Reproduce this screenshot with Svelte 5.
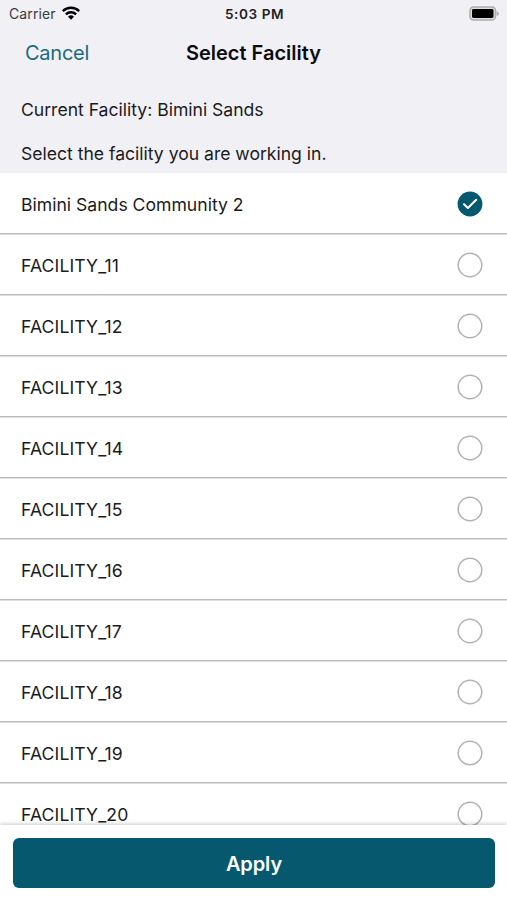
<script lang="ts">
	interface Facility {
		id: number;
		name: string;
	}

	const currentFacility = 'Bimini Sands';

	const facilities: Facility[] = [
		{ id: 1, name: 'Bimini Sands Community 2' },
		...Array.from({ length: 10 }, (_, i) => ({ id: i + 11, name: `FACILITY_${i + 11}` }))
	];

	let selected = $state(1);
</script>

<div class="screen">
	<header>
		<div class="status">
			<div class="carrier">
				<span>Carrier</span>
				<svg width="18" height="14" viewBox="0 0 18 14" aria-hidden="true">
					<g fill="none" stroke="#000" stroke-width="2.4">
						<path d="M0.8 5.1a11.6 11.6 0 0 1 16.4 0" />
						<path d="M3.9 8.4a7.2 7.2 0 0 1 10.2 0" />
					</g>
					<path d="M9 13.8 6 10.8a4.3 4.3 0 0 1 6 0z" />
				</svg>
			</div>
			<span class="time">5:03 PM</span>
			<svg class="battery" width="31" height="15" viewBox="0 0 31 15" aria-hidden="true">
				<rect x="1" y="1" width="25.5" height="13" rx="3.6" fill="#dededf" stroke="#adadaf" stroke-width="1.5" />
				<rect x="3" y="3" width="21.5" height="9" rx="1.4" />
				<path d="M27.6 5v5q2.4-1 2.4-2.5T27.6 5z" fill="#adadaf" />
			</svg>
		</div>

		<nav>
			<button class="cancel">Cancel</button>
			<h1>Select Facility</h1>
			<span></span>
		</nav>

		<p class="current">Current Facility: {currentFacility}</p>
		<p class="hint">Select the facility you are working in.</p>
	</header>

	<ul>
		{#each facilities as facility (facility.id)}
			<li>
				<button class="row" onclick={() => (selected = facility.id)}>
					<span class:code={facility.name.includes('_')}>{facility.name}</span>
					<svg width="26" height="26" viewBox="0 0 26 26" aria-hidden="true">
						{#if selected == facility.id}
							<circle cx="13" cy="13" r="12.4" fill="#05586e" />
							<path
								d="M7 13.2l3.9 3.8 8.3-8.3"
								fill="none"
								stroke="#fff"
								stroke-width="2"
								stroke-linecap="round"
								stroke-linejoin="round"
							/>
						{:else}
							<circle cx="13" cy="13" r="11.8" fill="#fff" stroke="#b3b3b3" stroke-width="1.5" />
						{/if}
					</svg>
				</button>
			</li>
		{/each}
	</ul>

	<footer>
		<button class="apply">Apply</button>
	</footer>
</div>

<style>
	:global(body) {
		margin: 0;
	}

	.screen {
		display: flex;
		flex-direction: column;
		height: 900px;
		overflow: hidden;
		background: #fff;
		color: #1b1b1d;
		font-family: Inter, 'Liberation Sans', sans-serif;
		font-size: 17.6px;
	}

	button {
		padding: 0;
		border: 0;
		background: none;
		color: inherit;
		font: inherit;
		letter-spacing: inherit;
		cursor: pointer;
	}

	/* Header */

	header {
		flex: none;
		box-sizing: border-box;
		height: 173px;
		background: #f1f0f5;
	}

	.status {
		display: grid;
		grid-template-columns: 1fr auto 1fr;
		align-items: center;
		height: 27px;
		padding: 0 7px 0 9px;
		font-size: 14px;
	}

	.carrier {
		display: flex;
		align-items: center;
		gap: 6px;
		color: #3a3a3c;
		letter-spacing: 0.12px;
	}

	.carrier svg {
		margin-bottom: 2px;
	}

	.time {
		color: #1f1f21;
		font-size: 13.6px;
		font-weight: 600;
		letter-spacing: 0.55px;
	}

	.battery {
		justify-self: end;
	}

	nav {
		display: grid;
		grid-template-columns: 1fr auto 1fr;
		align-items: center;
		height: 51px;
		padding: 0 25px;
	}

	.cancel {
		justify-self: start;
		color: #1c6a80;
		font-size: 20px;
		letter-spacing: -0.25px;
	}

	h1 {
		margin: 0;
		color: #0c0c0e;
		font-size: 20px;
		font-weight: 600;
	}

	p {
		margin: 0 21px;
		line-height: 22px;
		letter-spacing: -0.02px;
	}

	.current {
		padding-top: 21px;
	}

	.hint {
		padding-top: 22px;
	}

	/* Facility list */

	ul {
		flex: 1;
		min-height: 0;
		margin: 0;
		padding: 0;
		overflow: hidden;
		list-style: none;
	}

	li {
		box-sizing: border-box;
		height: 61.05px;
		border-bottom: 1px solid #bcbcbc;
		box-shadow: 0 1px #dedede;
	}

	.row {
		display: flex;
		align-items: center;
		justify-content: space-between;
		width: 100%;
		height: 100%;
		padding: 2px 24px 0 21px;
	}

	/* Contextual alternates would lift the underscore between capitals */
	.code {
		font-feature-settings: 'calt' 0;
		letter-spacing: 0.12px;
	}

	/* Footer */

	footer {
		position: relative;
		flex: none;
		box-sizing: border-box;
		height: 75px;
		padding: 13px 12px 12px 13px;
		background: #fff;
		box-shadow: 0 -1px 4px rgb(0 0 0 / 0.22);
	}

	.apply {
		width: 100%;
		height: 50px;
		padding-top: 1px;
		border-radius: 6px;
		background: #05586e;
		color: #fff;
		font-size: 20px;
		font-weight: 600;
		letter-spacing: -0.1px;
	}
</style>
